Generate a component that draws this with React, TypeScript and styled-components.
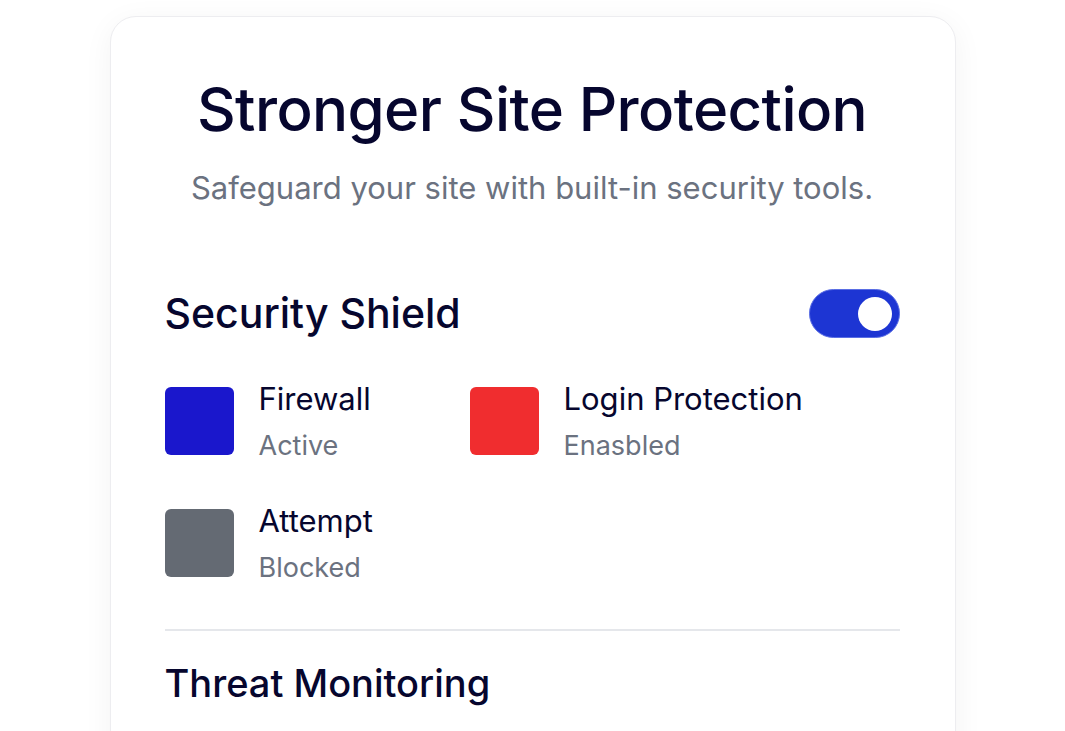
import styled, { createGlobalStyle } from "styled-components";

const GlobalStyle = createGlobalStyle`
  html, body {
    margin: 0;
    padding: 0;
    background: #ffffff;
  }
  body {
    font-family: Inter, "Noto Sans", sans-serif;
    color: #0b0b33;
    overflow: hidden;
  }
`;

const Page = styled.main`
  height: 731px;
  display: flex;
  justify-content: center;
  padding-top: 16px;
  box-sizing: border-box;
  overflow: hidden;
`;

const Card = styled.section`
  width: 846px;
  box-sizing: border-box;
  padding: 56px 55px 120px 54px;
  background: #ffffff;
  border: 1px solid #ededf0;
  border-radius: 26px;
  box-shadow: 0 6px 30px rgba(15, 23, 42, 0.05);
  align-self: flex-start;
`;

const Title = styled.h1`
  margin: 0;
  text-align: center;
  font-size: 60px;
  font-weight: 500;
  line-height: 1.2;
  letter-spacing: -0.01em;
  color: #06062e;
`;

const Subtitle = styled.p`
  margin: 23px 0 0;
  text-align: center;
  font-size: 31px;
  line-height: 1.3;
  color: #6b7280;
`;

const SectionHeader = styled.div`
  margin-top: 81px;
  display: flex;
  align-items: center;
  justify-content: space-between;
`;

const SectionTitle = styled.h2<{ $size?: number }>`
  margin: 0;
  font-size: ${(p) => p.$size ?? 38}px;
  font-weight: 500;
  line-height: 1.2;
  color: #06062e;
`;

const Toggle = styled.button<{ $on: boolean }>`
  width: 91px;
  height: 49px;
  padding: 0 7px;
  border-radius: 999px;
  border: 1.5px solid #5a6ee4;
  background: ${(p) => (p.$on ? "#1d35d3" : "#d1d5db")};
  display: flex;
  align-items: center;
  justify-content: ${(p) => (p.$on ? "flex-end" : "flex-start")};
  box-sizing: border-box;
  cursor: pointer;
`;

const Knob = styled.span`
  width: 34px;
  height: 34px;
  border-radius: 50%;
  background: #ffffff;
`;

const Features = styled.div`
  margin-top: 42px;
  display: grid;
  grid-template-columns: 305px 1fr;
  row-gap: 40px;
`;

const Feature = styled.div`
  display: flex;
  align-items: center;
  gap: 25px;
`;

const Swatch = styled.span<{ $color: string }>`
  width: 69px;
  height: 68px;
  border-radius: 6px;
  background: ${(p) => p.$color};
  flex-shrink: 0;
`;

const FeatureText = styled.div`
  display: flex;
  flex-direction: column;
  gap: 13px;
  white-space: nowrap;
`;

const FeatureName = styled.span`
  font-size: 31px;
  line-height: 37px;
  color: #06062e;
`;

const FeatureStatus = styled.span`
  font-size: 27px;
  line-height: 32px;
  color: #6b7280;
`;

const Divider = styled.hr`
  margin: 45px 0 0;
  border: none;
  border-top: 2px solid #e5e7eb;
`;

const NextTitle = styled(SectionTitle)`
  margin-top: 30px;
`;

const features = [
  { name: "Firewall", status: "Active", color: "#1a17cc" },
  { name: "Login Protection", status: "Enasbled", color: "#f02d2f" },
  { name: "Attempt", status: "Blocked", color: "#646a73" },
];

export default function App() {
  return (
    <>
      <GlobalStyle />
      <Page>
        <Card>
          <Title>Stronger Site Protection</Title>
          <Subtitle>Safeguard your site with built-in security tools.</Subtitle>

          <SectionHeader>
            <SectionTitle $size={41}>Security Shield</SectionTitle>
            <Toggle $on aria-label="Security Shield">
              <Knob />
            </Toggle>
          </SectionHeader>

          <Features>
            {features.map((f) => (
              <Feature key={f.name}>
                <Swatch $color={f.color} />
                <FeatureText>
                  <FeatureName>{f.name}</FeatureName>
                  <FeatureStatus>{f.status}</FeatureStatus>
                </FeatureText>
              </Feature>
            ))}
          </Features>

          <Divider />
          <NextTitle>Threat Monitoring</NextTitle>
        </Card>
      </Page>
    </>
  );
}
